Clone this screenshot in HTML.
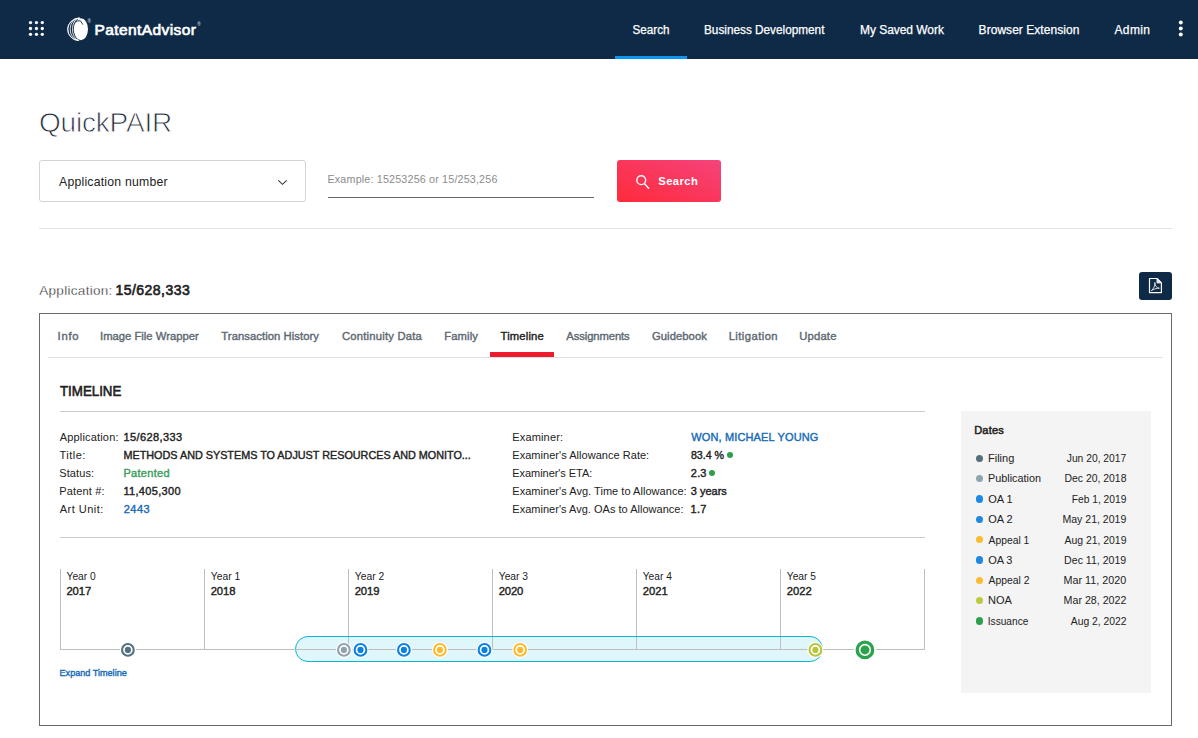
<!DOCTYPE html>
<html lang="en">
<head>
<meta charset="utf-8">
<title>QuickPAIR - PatentAdvisor</title>
<style>
*{box-sizing:border-box;margin:0;padding:0}
html,body{width:1198px;height:738px;overflow:hidden;background:#fff}
body{font-family:"Liberation Sans",Arial,sans-serif;color:#222;position:relative;font-size:12px}
a{text-decoration:none}
.t{position:absolute;display:block;white-space:nowrap;line-height:40px;height:40px;transform-origin:0 50%;font-style:normal}
.box{position:absolute}
#hdr{left:0;top:0;width:1198px;height:59px;background:#0e2a47}
#navul{left:615px;top:56px;width:72px;height:3px;background:#0a96f0}
#sel{left:39px;top:160px;width:267px;height:42px;border:1px solid #d4d4d4;border-radius:3px;background:#fff}
#inp{left:328px;top:197px;width:266px;height:1px;background:#666}
#btn{left:617px;top:160px;width:104px;height:42px;border-radius:3px;background:linear-gradient(to top right,#ff2a3a,#f5437c)}
.hr{position:absolute;height:1px;background:#e4e4e4}
#pdf{left:1139px;top:272px;width:33px;height:28px;border-radius:3px;background:#0e2a47}
#panel{left:39px;top:313px;width:1133px;height:413px;border:1px solid #6a6a6a}
#tabul{left:490px;top:352px;width:64px;height:5px;background:#ee1b2e}
#dates{left:961px;top:411px;width:190px;height:281.6px;background:#f4f4f4}
.dot{position:absolute;width:7.4px;height:7.4px;border-radius:50%}
.gd{position:absolute;width:6px;height:6px;border-radius:50%;background:#2e9e4b}
svg{position:absolute;left:0;top:0;overflow:visible}
</style>
</head>
<body>
<header>
<div id="hdr" class="box"></div>
<div id="navul" class="box"></div>
<svg width="1198" height="59" viewBox="0 0 1198 59">
 <g fill="#fff">
  <circle cx="30.50" cy="22.60" r="1.65"/><circle cx="36.45" cy="22.60" r="1.65"/><circle cx="42.30" cy="22.60" r="1.65"/><circle cx="30.50" cy="28.50" r="1.65"/><circle cx="36.45" cy="28.50" r="1.65"/><circle cx="42.30" cy="28.50" r="1.65"/><circle cx="30.50" cy="34.30" r="1.65"/><circle cx="36.45" cy="34.30" r="1.65"/><circle cx="42.30" cy="34.30" r="1.65"/>
  <circle cx="1180.8" cy="22.5" r="2"/><circle cx="1180.8" cy="28.5" r="2"/><circle cx="1180.8" cy="34.5" r="2"/>
 </g>
 <g id="globe">
  <ellipse cx="80.9" cy="29.2" rx="7.1" ry="11" fill="#fff"/>
  <g fill="none" stroke="#fff" stroke-width="0.85" stroke-linecap="round">
   <path d="M79.6 18 A6.7 11.2 0 0 0 78.8 40.5"/>
   <path d="M79.2 18 A8.6 11.2 0 0 0 78.4 40.5"/>
   <path d="M78.8 18.1 A10.5 11.2 0 0 0 78 40.5"/>
   <path d="M78.2 18.3 A12.3 11.2 0 0 0 77.4 40.4" stroke-opacity="0.9"/>
  </g>
  <path d="M75.5 22.3 Q77.4 20.2 80.4 20.8 L82.9 24.6" fill="none" stroke="#0e2a47" stroke-width="0.9"/>
 </g>
 <text x="87.4" y="23.4" font-size="4.6" font-weight="bold" fill="#c3ccd6" font-family="Liberation Sans, sans-serif">®</text>
 <text x="197.2" y="26.2" font-size="4.6" font-weight="bold" fill="#c3ccd6" font-family="Liberation Sans, sans-serif">®</text>
</svg>
<nav>
<span class="t" style="left:94.58px;top:10px;font-size:15.5px;font-weight:normal;-webkit-text-stroke:0.4px;color:#fff;letter-spacing:0.408px;-webkit-text-stroke:0.7px">PatentAdvisor</span>
<a class="t" href="#" style="left:632.00px;top:10px;font-size:12px;font-weight:normal;color:#fff;transform:translateX(0.55px) scaleX(0.9714);-webkit-text-stroke:0.25px">Search</a>
<a class="t" href="#" style="left:704.00px;top:10px;font-size:12px;font-weight:normal;color:#fff;transform:translateX(0.02px) scaleX(0.9812);-webkit-text-stroke:0.25px">Business Development</a>
<a class="t" href="#" style="left:860.00px;top:10px;font-size:12px;font-weight:normal;color:#fff;letter-spacing:-0.047px;-webkit-text-stroke:0.25px">My Saved Work</a>
<a class="t" href="#" style="left:978.60px;top:10px;font-size:12px;font-weight:normal;color:#fff;letter-spacing:0.043px;-webkit-text-stroke:0.25px">Browser Extension</a>
<a class="t" href="#" style="left:1114.48px;top:10px;font-size:12px;font-weight:normal;color:#fff;letter-spacing:0.376px;-webkit-text-stroke:0.25px">Admin</a>
</nav>
</header>
<main>
<section id="search">
<div id="sel" class="box"></div>
<div id="inp" class="box"></div>
<div id="btn" class="box"></div>
<svg width="1198" height="240" viewBox="0 0 1198 240">
 <path d="M278.3 180.3 L282.5 184.3 L286.7 180.3" fill="none" stroke="#3a3a3a" stroke-width="1.1"/>
 <circle cx="641.25" cy="180.2" r="4.4" fill="none" stroke="#fff" stroke-width="1.4"/>
 <path d="M644.6 183.8 L648.6 188.2" stroke="#fff" stroke-width="1.4" stroke-linecap="round"/>
</svg>
<h1 class="t" style="left:38.90px;top:103px;font-size:28px;font-weight:normal;color:#1f2a35;letter-spacing:-0.177px;-webkit-text-stroke:0.85px #fff">QuickPAIR</h1>
<span class="t" style="left:59.02px;top:162px;font-size:12.25px;font-weight:normal;color:#222;letter-spacing:0.219px">Application number</span>
<span class="t" style="left:327.50px;top:159px;font-size:10.75px;font-weight:normal;color:#8c8c8c;letter-spacing:0.164px">Example: 15253256 or 15/253,256</span>
<span class="t" style="left:658.30px;top:161px;font-size:11.25px;font-weight:bold;color:#fff;letter-spacing:0.408px">Search</span>
<div class="hr" style="left:39px;top:228px;width:1133px"></div>
</section>
<section id="result">
<span class="t" style="left:39.28px;top:271px;font-size:13.5px;font-weight:normal;color:#222;letter-spacing:0.298px;-webkit-text-stroke:0.3px #fff">Application:</span>
<b class="t" style="left:115.39px;top:270px;font-size:14px;font-weight:normal;-webkit-text-stroke:0.4px;color:#222;letter-spacing:0.488px;-webkit-text-stroke:0.65px">15/628,333</b>
<div id="pdf" class="box"></div>
<svg width="1198" height="320" viewBox="0 0 1198 320">
 <g fill="none" stroke="#fff" stroke-width="1.2" stroke-linejoin="round">
  <path d="M1149.5 278.5 H1157 L1161.4 282.9 V292.6 H1149.5 Z"/>
  <path d="M1157 278.5 V282.9 H1161.4 Z" stroke-width="0.9" fill="#fff" fill-opacity="0.75"/>
  <path d="M1151.4 290.6 C1153.6 288.8 1155.3 285.6 1154.8 282.4 C1154.9 286 1156.6 287.9 1159.4 288.2 C1156.6 288 1153.8 289.2 1151.4 290.6" stroke-width="0.8"/>
 </g>
</svg>
<div id="panel" class="box"></div>
<div class="hr" style="left:48px;top:357px;width:1115px;background:#e2e2e2"></div>
<div id="tabul" class="box"></div>
<nav id="tabs">
<a class="t" href="#" style="left:57.62px;top:316px;font-size:11.25px;font-weight:normal;-webkit-text-stroke:0.4px;color:#5e6973;letter-spacing:0.752px">Info</a>
<a class="t" href="#" style="left:100.12px;top:316px;font-size:11.25px;font-weight:normal;-webkit-text-stroke:0.4px;color:#5e6973">Image File Wrapper</a>
<a class="t" href="#" style="left:221.33px;top:316px;font-size:11.25px;font-weight:normal;-webkit-text-stroke:0.4px;color:#5e6973;letter-spacing:0.060px">Transaction History</a>
<a class="t" href="#" style="left:341.92px;top:316px;font-size:11.25px;font-weight:normal;-webkit-text-stroke:0.4px;color:#5e6973;letter-spacing:0.214px">Continuity Data</a>
<a class="t" href="#" style="left:444.17px;top:316px;font-size:11.25px;font-weight:normal;-webkit-text-stroke:0.4px;color:#5e6973;letter-spacing:0.133px">Family</a>
<a class="t" href="#" style="left:500.58px;top:316px;font-size:11.25px;font-weight:normal;-webkit-text-stroke:0.4px;color:#222;letter-spacing:0.151px">Timeline</a>
<a class="t" href="#" style="left:566.28px;top:316px;font-size:11.25px;font-weight:normal;-webkit-text-stroke:0.4px;color:#5e6973;letter-spacing:-0.092px">Assignments</a>
<a class="t" href="#" style="left:651.92px;top:316px;font-size:11.25px;font-weight:normal;-webkit-text-stroke:0.4px;color:#5e6973;letter-spacing:0.073px">Guidebook</a>
<a class="t" href="#" style="left:728.67px;top:316px;font-size:11.25px;font-weight:normal;-webkit-text-stroke:0.4px;color:#5e6973;letter-spacing:0.432px">Litigation</a>
<a class="t" href="#" style="left:799.20px;top:316px;font-size:11.25px;font-weight:normal;-webkit-text-stroke:0.4px;color:#5e6973;letter-spacing:0.191px">Update</a>
</nav>
<div class="hr" style="left:60px;top:411px;width:865px;background:#ccc"></div>
<div class="hr" style="left:60px;top:537px;width:865px;background:#ccc"></div>
<h2 class="t" style="left:59.00px;top:371px;font-size:14px;font-weight:normal;-webkit-text-stroke:0.4px;color:#222;transform:translateX(0.95px) scaleX(0.9512);-webkit-text-stroke:0.6px">TIMELINE</h2>
<span class="t" style="left:59.78px;top:417px;font-size:11px;font-weight:normal;color:#222;letter-spacing:0.170px">Application:</span>
<span class="t" style="left:59.58px;top:435px;font-size:11px;font-weight:normal;color:#222;letter-spacing:0.453px">Title:</span>
<span class="t" style="left:59.30px;top:453px;font-size:11px;font-weight:normal;color:#222;letter-spacing:0.091px">Status:</span>
<span class="t" style="left:59.19px;top:471px;font-size:11px;font-weight:normal;color:#222;letter-spacing:0.174px">Patent #:</span>
<span class="t" style="left:59.78px;top:489px;font-size:11px;font-weight:normal;color:#222;letter-spacing:0.484px">Art Unit:</span>
<b class="t" style="left:123.47px;top:417px;font-size:11px;font-weight:normal;-webkit-text-stroke:0.4px;color:#222;letter-spacing:0.397px">15/628,333</b>
<b class="t" style="left:123.00px;top:435px;font-size:11px;font-weight:normal;-webkit-text-stroke:0.4px;color:#222;transform:translateX(0.51px) scaleX(0.9820)">METHODS AND SYSTEMS TO ADJUST RESOURCES AND MONITO...</b>
<b class="t" style="left:123.49px;top:453px;font-size:11px;font-weight:normal;-webkit-text-stroke:0.4px;color:#3c9d5d;letter-spacing:0.282px">Patented</b>
<b class="t" style="left:123.47px;top:471px;font-size:11px;font-weight:normal;-webkit-text-stroke:0.4px;color:#222;letter-spacing:0.310px">11,405,300</b>
<a class="t" href="#" style="left:123.76px;top:489px;font-size:11px;font-weight:normal;-webkit-text-stroke:0.4px;color:#176bb8;letter-spacing:0.467px">2443</a>
<span class="t" style="left:512.29px;top:417px;font-size:11px;font-weight:normal;color:#222;letter-spacing:0.153px">Examiner:</span>
<span class="t" style="left:512.29px;top:435px;font-size:11px;font-weight:normal;color:#222;letter-spacing:0.036px">Examiner's Allowance Rate:</span>
<span class="t" style="left:512.29px;top:453px;font-size:11px;font-weight:normal;color:#222;letter-spacing:-0.053px">Examiner's ETA:</span>
<span class="t" style="left:512.29px;top:471px;font-size:11px;font-weight:normal;color:#222;letter-spacing:0.039px">Examiner's Avg. Time to Allowance:</span>
<span class="t" style="left:512.29px;top:489px;font-size:11px;font-weight:normal;color:#222;letter-spacing:0.019px">Examiner's Avg. OAs to Allowance:</span>
<a class="t" href="#" style="left:691.18px;top:417px;font-size:11px;font-weight:normal;-webkit-text-stroke:0.4px;color:#176bb8;letter-spacing:0.149px">WON, MICHAEL YOUNG</a>
<b class="t" style="left:690.00px;top:435px;font-size:11px;font-weight:normal;-webkit-text-stroke:0.4px;color:#222;transform:translateX(0.90px) scaleX(0.9666)">83.4 %</b>
<b class="t" style="left:690.86px;top:453px;font-size:11px;font-weight:normal;-webkit-text-stroke:0.4px;color:#222;letter-spacing:0.151px">2.3</b>
<b class="t" style="left:690.79px;top:471px;font-size:11px;font-weight:normal;-webkit-text-stroke:0.4px;color:#222">3 years</b>
<b class="t" style="left:690.57px;top:489px;font-size:11px;font-weight:normal;-webkit-text-stroke:0.4px;color:#222;letter-spacing:0.259px">1.7</b>
<i class="gd" style="left:727.2px;top:452px"></i>
<i class="gd" style="left:709.4px;top:470px"></i>
<svg width="1198" height="738" viewBox="0 0 1198 738">
 <g stroke="#bdbdbd" stroke-width="1" fill="none">
  <path d="M60.5 569 V649.5 H924.5 V569"/>
  <path d="M204.5 569 V649 M348.5 569 V649 M492.5 569 V649 M636.5 569 V649 M780.5 569 V649"/>
 </g>
 <rect x="295.5" y="636.5" width="527" height="25" rx="12.5" fill="#dff6fa" stroke="#0ab6cf" stroke-width="1"/>
 <g fill="none" stroke="#bdbdbd"><path d="M295 649.5 H823"/><path d="M348.5 637 V649 M492.5 637 V649 M636.5 637 V649 M780.5 637 V649"/></g>
 <g id="markers">
  <g><circle cx="127.9" cy="649.9" r="8" fill="#fff"/><circle cx="127.9" cy="649.9" r="5.85" fill="#fff" stroke="#54707e" stroke-width="2.1"/><circle cx="127.9" cy="649.9" r="3.1" fill="#54707e"/></g>
  <g><circle cx="343.9" cy="649.9" r="8" fill="#fff"/><circle cx="343.9" cy="649.9" r="5.85" fill="#fff" stroke="#8fa3ad" stroke-width="2.1"/><circle cx="343.9" cy="649.9" r="3.1" fill="#8fa3ad"/></g>
  <g><circle cx="360.5" cy="649.9" r="8" fill="#fff"/><circle cx="360.5" cy="649.9" r="5.85" fill="#fff" stroke="#0b80e3" stroke-width="2.1"/><circle cx="360.5" cy="649.9" r="3.1" fill="#0b80e3"/></g>
  <g><circle cx="403.9" cy="649.9" r="8" fill="#fff"/><circle cx="403.9" cy="649.9" r="5.85" fill="#fff" stroke="#0b80e3" stroke-width="2.1"/><circle cx="403.9" cy="649.9" r="3.1" fill="#0b80e3"/></g>
  <g><circle cx="439.9" cy="649.9" r="8" fill="#fff"/><circle cx="439.9" cy="649.9" r="5.85" fill="#fff" stroke="#fdbb30" stroke-width="2.1"/><circle cx="439.9" cy="649.9" r="3.1" fill="#fdbb30"/></g>
  <g><circle cx="484.5" cy="649.9" r="8" fill="#fff"/><circle cx="484.5" cy="649.9" r="5.85" fill="#fff" stroke="#0b80e3" stroke-width="2.1"/><circle cx="484.5" cy="649.9" r="3.1" fill="#0b80e3"/></g>
  <g><circle cx="520.2" cy="649.9" r="8" fill="#fff"/><circle cx="520.2" cy="649.9" r="5.85" fill="#fff" stroke="#fdbb30" stroke-width="2.1"/><circle cx="520.2" cy="649.9" r="3.1" fill="#fdbb30"/></g>
  <g><circle cx="815.4" cy="649.9" r="8" fill="#fff"/><circle cx="815.4" cy="649.9" r="5.85" fill="#fff" stroke="#b8c43a" stroke-width="2.1"/><circle cx="815.4" cy="649.9" r="3.1" fill="#b8c43a"/></g>
  <g><circle cx="864.95" cy="649.9" r="11.2" fill="#fff"/><circle cx="864.95" cy="649.9" r="7.75" fill="#fff" stroke="#2ba24c" stroke-width="3.3"/><circle cx="864.95" cy="649.9" r="4.5" fill="#2ba24c"/></g>
 </g>
</svg>
<span class="t" style="left:66.00px;top:556px;font-size:11.25px;font-weight:normal;color:#222;transform:translateX(0.50px) scaleX(0.9098)">Year 0</span>
<b class="t" style="left:66.45px;top:571px;font-size:11.25px;font-weight:normal;-webkit-text-stroke:0.4px;color:#222;letter-spacing:-0.093px">2017</b>
<span class="t" style="left:210.00px;top:556px;font-size:11.25px;font-weight:normal;color:#222;transform:translateX(0.75px) scaleX(0.9155)">Year 1</span>
<b class="t" style="left:210.70px;top:571px;font-size:11.25px;font-weight:normal;-webkit-text-stroke:0.4px;color:#222;letter-spacing:-0.100px">2018</b>
<span class="t" style="left:354.00px;top:556px;font-size:11.25px;font-weight:normal;color:#222;transform:translateX(0.75px) scaleX(0.9155)">Year 2</span>
<b class="t" style="left:354.70px;top:571px;font-size:11.25px;font-weight:normal;-webkit-text-stroke:0.4px;color:#222;letter-spacing:-0.094px">2019</b>
<span class="t" style="left:498.00px;top:556px;font-size:11.25px;font-weight:normal;color:#222;transform:translateX(0.75px) scaleX(0.9113)">Year 3</span>
<b class="t" style="left:498.70px;top:571px;font-size:11.25px;font-weight:normal;-webkit-text-stroke:0.4px;color:#222;letter-spacing:-0.117px">2020</b>
<span class="t" style="left:642.00px;top:556px;font-size:11.25px;font-weight:normal;color:#222;transform:translateX(0.76px) scaleX(0.9044)">Year 4</span>
<b class="t" style="left:642.70px;top:571px;font-size:11.25px;font-weight:normal;-webkit-text-stroke:0.4px;color:#222">2021</b>
<span class="t" style="left:786.00px;top:556px;font-size:11.25px;font-weight:normal;color:#222;transform:translateX(0.75px) scaleX(0.9111)">Year 5</span>
<b class="t" style="left:786.70px;top:571px;font-size:11.25px;font-weight:normal;-webkit-text-stroke:0.4px;color:#222">2022</b>
<a class="t" href="#" style="left:59.00px;top:653px;font-size:9.5px;font-weight:normal;-webkit-text-stroke:0.4px;color:#176bb8;transform:translateX(0.55px) scaleX(0.9569)">Expand Timeline</a>
<aside>
<div id="dates" class="box"></div>
<i class="dot" style="left:975.7px;top:454.5px;background:#546e7a"></i>
<i class="dot" style="left:975.7px;top:474.9px;background:#90a4ae"></i>
<i class="dot" style="left:975.7px;top:495.3px;background:#1e88e5"></i>
<i class="dot" style="left:975.7px;top:515.6px;background:#1e88e5"></i>
<i class="dot" style="left:975.7px;top:536px;background:#fdbb30"></i>
<i class="dot" style="left:975.7px;top:556.3px;background:#1e88e5"></i>
<i class="dot" style="left:975.7px;top:576.7px;background:#fdbb30"></i>
<i class="dot" style="left:975.7px;top:597px;background:#bfc93f"></i>
<i class="dot" style="left:975.7px;top:617.4px;background:#2e9e4b"></i>
<b class="t" style="left:974.19px;top:410px;font-size:11px;font-weight:normal;-webkit-text-stroke:0.4px;color:#222;letter-spacing:0.191px;-webkit-text-stroke:0.5px">Dates</b>
<span class="t" style="left:987.99px;top:438px;font-size:11px;font-weight:normal;color:#222">Filing</span>
<span class="t" style="left:1066.00px;top:438px;font-size:11px;font-weight:normal;color:#222;transform:translateX(0.73px) scaleX(0.9357)">Jun 20, 2017</span>
<span class="t" style="left:988.00px;top:458px;font-size:11px;font-weight:normal;color:#222;transform:translateX(0.01px) scaleX(0.9846)">Publication</span>
<span class="t" style="left:1064.00px;top:458px;font-size:11px;font-weight:normal;color:#222;transform:translateX(0.44px) scaleX(0.9480)">Dec 20, 2018</span>
<span class="t" style="left:988.28px;top:479px;font-size:11px;font-weight:normal;color:#222">OA 1</span>
<span class="t" style="left:1071.00px;top:479px;font-size:11px;font-weight:normal;color:#222;transform:translateX(0.75px) scaleX(0.9296)">Feb 1, 2019</span>
<span class="t" style="left:988.28px;top:499px;font-size:11px;font-weight:normal;color:#222">OA 2</span>
<span class="t" style="left:1062.00px;top:499px;font-size:11px;font-weight:normal;color:#222;transform:translateX(0.43px) scaleX(0.9581)">May 21, 2019</span>
<span class="t" style="left:988.00px;top:520px;font-size:11px;font-weight:normal;color:#222;transform:translateX(0.59px) scaleX(0.9387)">Appeal 1</span>
<span class="t" style="left:1064.00px;top:520px;font-size:11px;font-weight:normal;color:#222;transform:translateX(0.49px) scaleX(0.9464)">Aug 21, 2019</span>
<span class="t" style="left:988.28px;top:540px;font-size:11px;font-weight:normal;color:#222;letter-spacing:-0.107px">OA 3</span>
<span class="t" style="left:1064.00px;top:540px;font-size:11px;font-weight:normal;color:#222;transform:translateX(0.12px) scaleX(0.9615)">Dec 11, 2019</span>
<span class="t" style="left:988.00px;top:560px;font-size:11px;font-weight:normal;color:#222;transform:translateX(0.59px) scaleX(0.9428)">Appeal 2</span>
<span class="t" style="left:1063.00px;top:560px;font-size:11px;font-weight:normal;color:#222;transform:translateX(0.61px) scaleX(0.9772)">Mar 11, 2020</span>
<span class="t" style="left:987.99px;top:580px;font-size:11px;font-weight:normal;color:#222">NOA</span>
<span class="t" style="left:1063.00px;top:580px;font-size:11px;font-weight:normal;color:#222;transform:translateX(0.62px) scaleX(0.9680)">Mar 28, 2022</span>
<span class="t" style="left:987.00px;top:601px;font-size:11px;font-weight:normal;color:#222;transform:translateX(0.75px) scaleX(0.9226)">Issuance</span>
<span class="t" style="left:1070.00px;top:601px;font-size:11px;font-weight:normal;color:#222;transform:translateX(0.79px) scaleX(0.9379)">Aug 2, 2022</span>
</aside>
</section>
</main>
</body>
</html>
